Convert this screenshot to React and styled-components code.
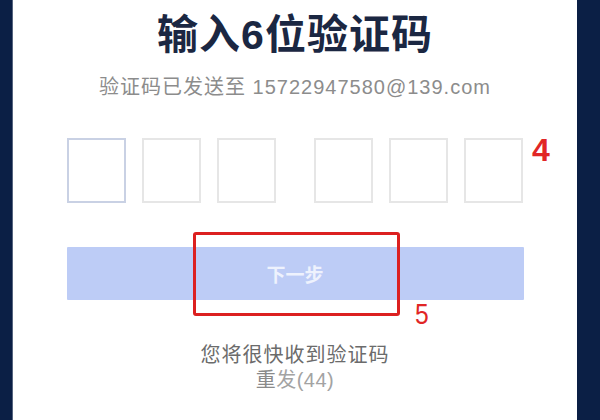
import React from "react";
import styled, { createGlobalStyle, css } from "styled-components";

const GlobalStyle = createGlobalStyle`
  html, body {
    margin: 0;
    padding: 0;
    background: #0b1f45;
  }
  body {
    font-family: "Liberation Sans", "Noto Sans CJK SC", sans-serif;
  }
`;

const Frame = styled.div`
  display: flex;
  width: 600px;
  height: 420px;
  overflow: hidden;
  background: #0b1f45;
`;

const Panel = styled.div`
  margin-left: 12px;
  width: 565px;
  height: 420px;
  background: #ffffff;
  border-left: 1px solid #56657f;
  display: flex;
  flex-direction: column;
  align-items: center;
  padding-top: 11px;
  box-sizing: border-box;
`;

const Title = styled.h1`
  margin: 0;
  font-size: 41px;
  line-height: 48px;
  font-weight: 700;
  letter-spacing: 1px;
  color: #1b2742;
`;

const Subtitle = styled.div`
  margin-top: 16px;
  font-size: 20px;
  line-height: 24px;
  letter-spacing: 1px;
  color: #8c8c8c;
`;

const CodeRow = styled.div`
  position: relative;
  margin-top: 39px;
  display: flex;
  gap: 17px;
`;

const CodeGroup = styled.div`
  display: flex;
  gap: 16px;
  & + & {
    margin-left: 21px;
  }
`;

const CodeBox = styled.div`
  width: 59px;
  height: 65px;
  box-sizing: border-box;
  border: 2px solid #e6e6e6;
  background: #fff;
  ${(p) =>
    p.$focused &&
    css`
      border-color: #c9d1e4;
    `}
`;

const Mark = styled.span`
  position: absolute;
  color: #e12626;
  font-family: "Liberation Sans", sans-serif;
  line-height: 1;
  ${(p) =>
    p.$bold &&
    css`
      font-weight: 700;
    `}
`;

const FourMark = styled(Mark)`
  left: calc(100% + 9px);
  top: -4px;
  font-size: 32px;
`;

const ButtonWrap = styled.div`
  position: relative;
  margin-top: 44px;
`;

const NextButton = styled.button`
  display: flex;
  align-items: center;
  justify-content: center;
  width: 457px;
  height: 53px;
  border: none;
  border-radius: 1px;
  background: #bdccf6;
  color: #eef2fd;
  font-family: "Noto Sans CJK SC", sans-serif;
  font-size: 19px;
  font-weight: 700;
  padding: 0;
`;

const Highlight = styled.div`
  position: absolute;
  left: 126px;
  top: -15px;
  width: 207px;
  height: 84px;
  box-sizing: border-box;
  border: 3px solid #dc2020;
  border-radius: 3px;
`;

const FiveMark = styled(Mark)`
  left: 348px;
  top: 53px;
  font-size: 29px;
  transform: scaleX(0.85);
  transform-origin: left top;
`;

const Hint = styled.div`
  margin-top: 43px;
  font-size: 20px;
  line-height: 24px;
  letter-spacing: 1px;
  color: #6b6b6b;
`;

const Resend = styled.div`
  margin-top: 1px;
  font-size: 20px;
  line-height: 24px;
  letter-spacing: 0.5px;
  color: #a3a3a3;
  & b {
    font-weight: 400;
    color: #8a8a8a;
  }
`;

export default function App() {
  return (
    <>
      <GlobalStyle />
      <Frame>
        <Panel>
          <Title>输入6位验证码</Title>
          <Subtitle>验证码已发送至 15722947580@139.com</Subtitle>
          <CodeRow>
            <CodeGroup>
              <CodeBox $focused />
              <CodeBox />
              <CodeBox />
            </CodeGroup>
            <CodeGroup>
              <CodeBox />
              <CodeBox />
              <CodeBox />
            </CodeGroup>
            <FourMark $bold>4</FourMark>
          </CodeRow>
          <ButtonWrap>
            <NextButton>下一步</NextButton>
            <Highlight />
            <FiveMark>5</FiveMark>
          </ButtonWrap>
          <Hint>您将很快收到验证码</Hint>
          <Resend>
            <b>重</b>发(44)
          </Resend>
        </Panel>
      </Frame>
    </>
  );
}
